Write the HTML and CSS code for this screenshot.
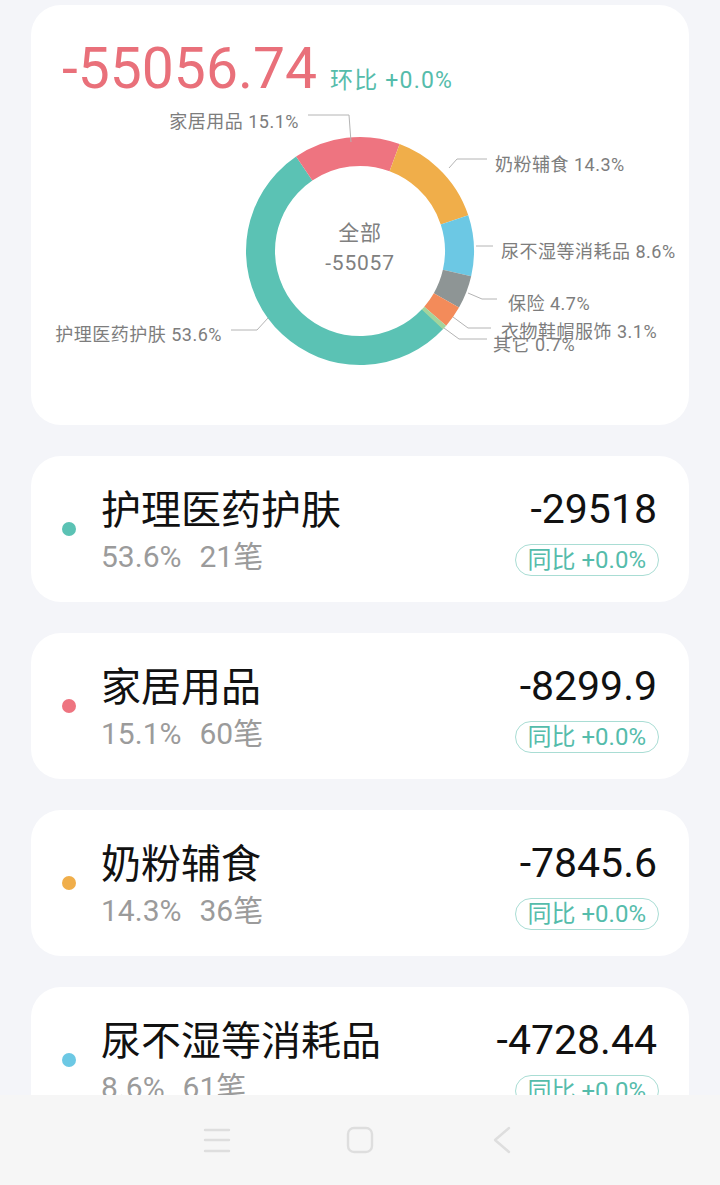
FILE: index.html
```html
<!DOCTYPE html>
<html lang="zh-CN">
<head>
<meta charset="utf-8">
<title>分类统计</title>
<link rel="stylesheet" href="styles.css">
</head>
<body>
<main class="page">
  <section class="card summary">
    <div class="summary-head">
      <span class="total">-55056.74</span>
      <span class="ratio">环比 +0.0%</span>
    </div>
    <svg class="chart" width="644" height="320" viewBox="0 0 644 320">
      <g transform="rotate(43 329 154)" fill="none" stroke-width="29">
        <circle cx="329" cy="154" r="99.5" pathLength="100" stroke="#5bc2b4" stroke-dasharray="53.6 46.4" stroke-dashoffset="0"/>
        <circle cx="329" cy="154" r="99.5" pathLength="100" stroke="#ee7480" stroke-dasharray="15.1 84.9" stroke-dashoffset="-53.6"/>
        <circle cx="329" cy="154" r="99.5" pathLength="100" stroke="#f0ae4a" stroke-dasharray="14.3 85.7" stroke-dashoffset="-68.7"/>
        <circle cx="329" cy="154" r="99.5" pathLength="100" stroke="#6cc8e4" stroke-dasharray="8.6 91.4" stroke-dashoffset="-83"/>
        <circle cx="329" cy="154" r="99.5" pathLength="100" stroke="#8e9595" stroke-dasharray="4.7 95.3" stroke-dashoffset="-91.6"/>
        <circle cx="329" cy="154" r="99.5" pathLength="100" stroke="#f38b5a" stroke-dasharray="3.1 96.9" stroke-dashoffset="-96.3"/>
        <circle cx="329" cy="154" r="99.5" pathLength="100" stroke="#a3d49c" stroke-dasharray="0.7 99.3" stroke-dashoffset="-99.4"/>
      </g>
      <g class="lines" fill="none" stroke="#b4b4b4" stroke-width="1">
        <polyline points="320,45 318,18 277,18"/>
        <polyline points="418,71 426,62 456,62"/>
        <polyline points="445,149 462,149"/>
        <polyline points="437,196 451,202 466,202"/>
        <polyline points="422,220 437,231 460,231"/>
        <polyline points="413,231 428,242 456,242"/>
        <polyline points="237,221 226,233 200,233"/>
      </g>
      <g class="labels">
        <text x="268" y="31" text-anchor="end">家居用品 15.1%</text>
        <text x="464" y="74">奶粉辅食 14.3%</text>
        <text x="470" y="161">尿不湿等消耗品 8.6%</text>
        <text x="477" y="213">保险 4.7%</text>
        <text x="470" y="241">衣物鞋帽服饰 3.1%</text>
        <text x="462" y="254">其它 0.7%</text>
        <text x="191" y="244" text-anchor="end">护理医药护肤 53.6%</text>
      </g>
      <g class="center">
        <text x="329" y="143" text-anchor="middle">全部</text>
        <text x="329" y="173" text-anchor="middle">-55057</text>
      </g>
    </svg>
  </section>

  <section class="card item">
    <span class="dot dot-teal"></span>
    <div class="item-main">
      <div class="item-name">护理医药护肤</div>
      <div class="item-sub"><span>53.6%</span><span>21笔</span></div>
    </div>
    <div class="item-side">
      <div class="item-amount">-29518</div>
      <div class="badge">同比 +0.0%</div>
    </div>
  </section>

  <section class="card item">
    <span class="dot dot-red"></span>
    <div class="item-main">
      <div class="item-name">家居用品</div>
      <div class="item-sub"><span>15.1%</span><span>60笔</span></div>
    </div>
    <div class="item-side">
      <div class="item-amount">-8299.9</div>
      <div class="badge">同比 +0.0%</div>
    </div>
  </section>

  <section class="card item">
    <span class="dot dot-orange"></span>
    <div class="item-main">
      <div class="item-name">奶粉辅食</div>
      <div class="item-sub"><span>14.3%</span><span>36笔</span></div>
    </div>
    <div class="item-side">
      <div class="item-amount">-7845.6</div>
      <div class="badge">同比 +0.0%</div>
    </div>
  </section>

  <section class="card item">
    <span class="dot dot-blue"></span>
    <div class="item-main">
      <div class="item-name">尿不湿等消耗品</div>
      <div class="item-sub"><span>8.6%</span><span>61笔</span></div>
    </div>
    <div class="item-side">
      <div class="item-amount">-4728.44</div>
      <div class="badge">同比 +0.0%</div>
    </div>
  </section>
</main>

<nav class="navbar">
  <svg class="nav-icon" width="28" height="28" viewBox="0 0 28 28">
    <g stroke="#dedede" stroke-width="2.4" stroke-linecap="round">
      <line x1="2" y1="4" x2="26" y2="4"/>
      <line x1="2" y1="14" x2="26" y2="14"/>
      <line x1="2" y1="25" x2="26" y2="25"/>
    </g>
  </svg>
  <svg class="nav-icon" width="28" height="28" viewBox="0 0 28 28">
    <rect x="2" y="2" width="24" height="24" rx="6" fill="none" stroke="#dedede" stroke-width="2.4"/>
  </svg>
  <svg class="nav-icon" width="28" height="28" viewBox="0 0 28 28">
    <polyline points="20,2 6,14 20,26" fill="none" stroke="#dedede" stroke-width="2.4" stroke-linecap="round" stroke-linejoin="round"/>
  </svg>
</nav>
</body>
</html>
```

FILE: styles.css
```css
* {
  box-sizing: border-box;
}

html, body {
  margin: 0;
  padding: 0;
}

body {
  width: 720px;
  height: 1185px;
  overflow: hidden;
  background: #f4f5f9;
  font-family: "Roboto", "Noto Sans CJK SC", sans-serif;
  color: #111;
}

.page {
  display: flex;
  flex-direction: column;
  gap: 31px;
  padding: 5px 31px 0;
}

.card {
  background: #ffffff;
  border-radius: 30px;
}

.summary {
  height: 420px;
  padding-top: 35px;
  overflow: hidden;
}

.summary-head {
  display: flex;
  align-items: baseline;
  gap: 13px;
  padding-left: 31px;
  height: 57px;
}

.total {
  font-size: 57px;
  line-height: 57px;
  color: #e9707a;
}

.ratio {
  font-size: 23px;
  letter-spacing: 1.2px;
  color: #55bcab;
}

.chart {
  display: block;
}

.labels text {
  font-family: "Roboto", "Noto Sans CJK SC", sans-serif;
  font-size: 18px;
  letter-spacing: 0.5px;
  fill: #7d7d7d;
}

.center text {
  font-family: "Roboto", "Noto Sans CJK SC", sans-serif;
  font-size: 21px;
  letter-spacing: 0.8px;
  fill: #808080;
}

.item {
  height: 146px;
  display: flex;
  align-items: center;
  padding: 0 30px 0 31px;
}

.dot {
  width: 14px;
  height: 14px;
  border-radius: 50%;
  flex: none;
  margin-right: 25px;
}

.dot-teal { background: #5bc2b4; }
.dot-red { background: #ee7480; }
.dot-orange { background: #f0ae4a; }
.dot-blue { background: #6cc8e4; }

.item-main {
  flex: 1;
  padding-top: 6px;
}

.item-name {
  font-family: "Noto Sans CJK SC", sans-serif;
  font-size: 40px;
  line-height: 50px;
  color: #111;
}

.item-sub {
  display: flex;
  gap: 18px;
  font-size: 30px;
  line-height: 50px;
  color: #9b9b9b;
}

.item-side {
  display: flex;
  flex-direction: column;
  align-items: flex-end;
  padding-top: 2px;
}

.item-amount {
  font-size: 41px;
  line-height: 50px;
  color: #111;
  margin-right: 2px;
}

.badge {
  margin-top: 10px;
  height: 32px;
  padding: 0 12px;
  border: 1px solid #a9ddd4;
  border-radius: 16px;
  font-size: 24px;
  line-height: 30px;
  color: #55bcab;
  white-space: nowrap;
}

.navbar {
  position: fixed;
  left: 0;
  bottom: 0;
  width: 720px;
  height: 90px;
  background: #f6f6f6;
  display: flex;
  justify-content: center;
  align-items: center;
  gap: 115px;
}

.nav-icon {
  display: block;
}
```
